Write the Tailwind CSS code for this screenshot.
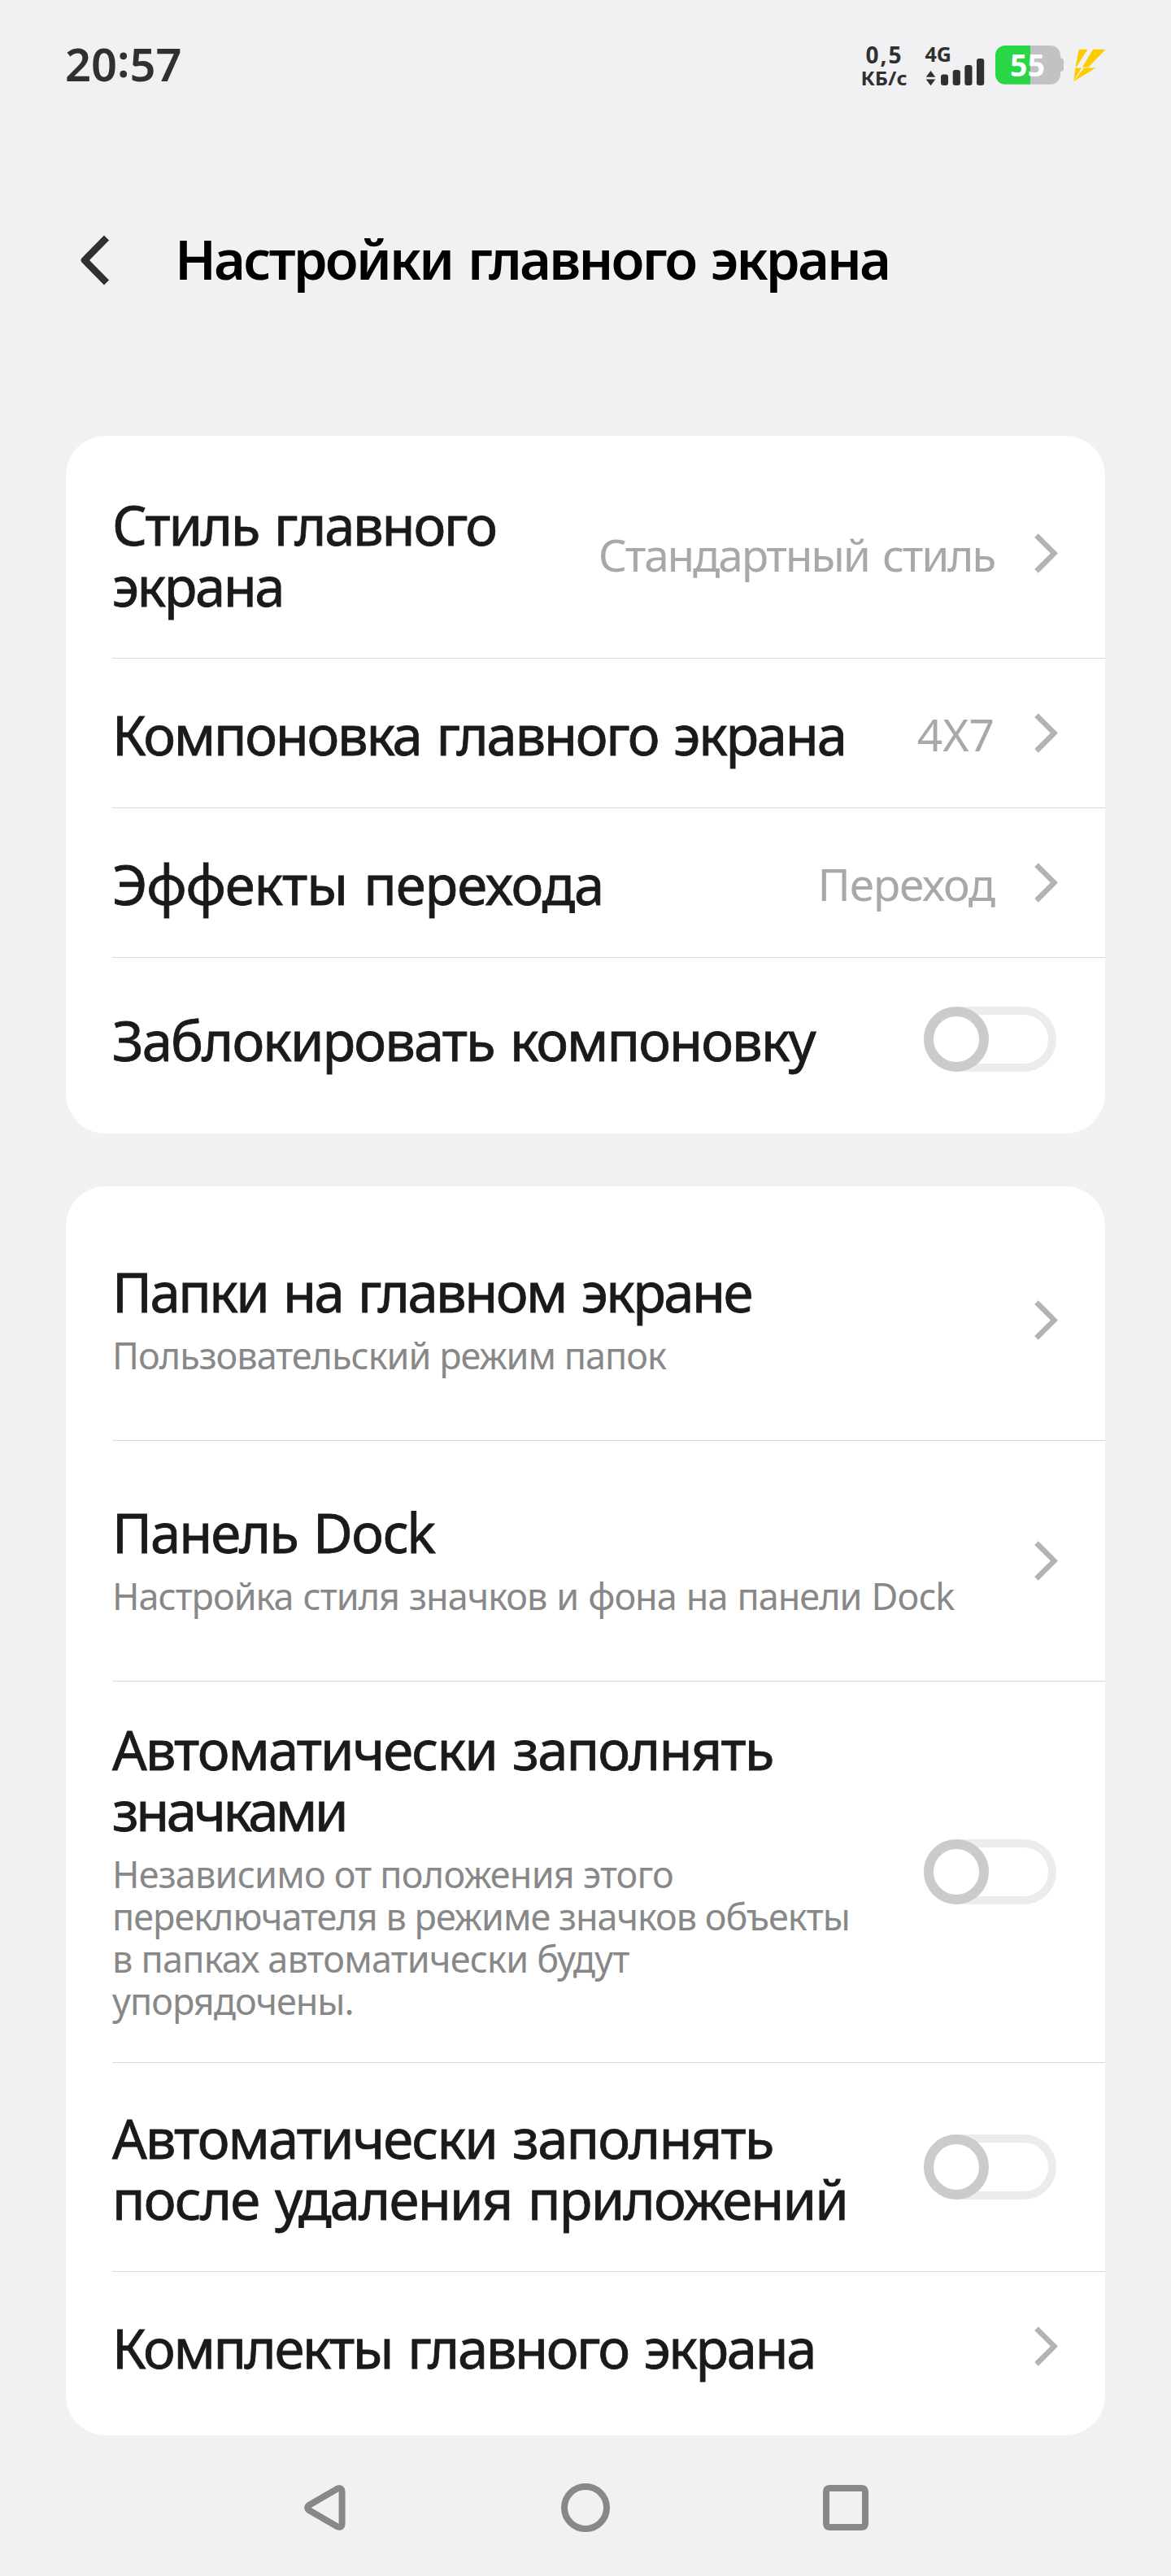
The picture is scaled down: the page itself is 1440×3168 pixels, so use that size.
<!DOCTYPE html>
<html lang="ru">
<head>
<meta charset="utf-8">
<meta name="viewport" content="width=device-width, initial-scale=1">
<title>Настройки главного экрана</title>
<script src="https://cdn.jsdelivr.net/npm/@tailwindcss/browser@4"></script>
</head>
<body class="bg-[#f1f1f4] font-['Noto_Sans',sans-serif] whitespace-nowrap">
<svg width="0" height="0" class="hidden">
  <symbol id="chevron" viewBox="0 0 29 49"><path d="M2.5 2.6 24.4 24.5 2.5 46.4" fill="none" stroke="#b3b3b3" stroke-width="6.5"/></symbol>
</svg>
<div class="flex h-[3168px] w-[1440px] flex-col overflow-hidden">

  <!-- Status bar -->
  <div class="flex h-[160px] shrink-0 items-start justify-between pl-[80px] pr-[79px] pt-[50px] text-[#303030]">
    <div class="-mt-[10px] text-[56px] leading-[76px] font-semibold">20<span class="relative -top-[5px]">:</span>57</div>
    <div class="flex">
      <svg class="mr-[16px] overflow-visible" width="62" height="60" viewBox="0 0 62 60" fill="#303030" font-weight="700" text-anchor="middle">
        <text x="30.5" y="27.5" font-size="28" textLength="44">0,5</text>
        <text x="31" y="54.8" font-size="24" textLength="57" lengthAdjust="spacingAndGlyphs">КБ/с</text>
      </svg>
      <svg class="mr-[10px]" width="80" height="60" viewBox="0 0 80 60" fill="#303030">
        <text x="3.5" y="25.7" font-size="25" font-weight="700" textLength="32.5" lengthAdjust="spacingAndGlyphs">4G</text>
        <path d="M10.5 37 16.3 44.7H4.7ZM10.5 55.3 4.7 47.6H16.3Z"/>
        <rect x="23" y="41.5" width="9" height="13.5" rx="3"/>
        <rect x="37.7" y="36" width="9.2" height="19" rx="3"/>
        <rect x="52.3" y="30" width="9.2" height="25" rx="3"/>
        <rect x="67" y="22" width="9.2" height="33" rx="3"/>
      </svg>
      <svg class="mr-[7px]" width="85" height="60" viewBox="0 0 85 60">
        <path d="M43 6H68A12 12 0 0 1 80 18V21.3C83 21.6 84 23 84 25V34.5C84 36.5 83 38 80 38.3V41.7A12 12 0 0 1 68 53.7H43Z" fill="#c2c2c5"/>
        <path d="M12 6H43V53.7H12A12 12 0 0 1 0 41.7V18A12 12 0 0 1 12 6Z" fill="#29d645"/>
        <text x="39.4" y="43.5" font-size="37.5" font-weight="700" fill="#fff" text-anchor="middle">55</text>
      </svg>
      <svg width="45" height="60" viewBox="0 0 45 60" fill="#fecb00">
        <path d="M10.7 10.7H21.5L8 32H6.7ZM28 10.7H43.5L22.5 32.6H15ZM6.5 33.4H14.2L4.2 49.2ZM17 33.4H31.5L3.8 50.5Z"/>
      </svg>
    </div>
  </div>

  <!-- Title -->
  <div class="flex h-[376px] shrink-0 items-start gap-[79px] pl-[96px] pt-[120px]">
    <svg width="40" height="76" viewBox="0 0 40 76"><path d="M35 12.5 8 40 35 67.5" fill="none" stroke="#303030" stroke-width="8.6" stroke-linejoin="round"/></svg>
    <h1 class="text-[67px] leading-[76px] font-semibold tracking-[-2.8px] [word-spacing:4px] text-black">Настройки главного экрана</h1>
  </div>

  <!-- Layout settings -->
  <div class="mx-[81px] h-[858px] shrink-0 rounded-[49px] bg-white pl-[57px] text-[67px] leading-[76px] font-normal tracking-[-2.3px] [word-spacing:4px] text-[#1a1a1a] [-webkit-text-stroke:0.8px_#1a1a1a]">
    <div class="flex h-[274px] items-start border-b border-[#d9d9d9] pr-[58px]">
      <div class="mt-[72px] flex-1 leading-[75px]">Стиль главного<br><span class="tracking-[-2.5px]">экрана</span></div>
      <div class="mt-[108px] mr-[49px] text-[55px] leading-[75px] tracking-[-2.2px] text-[#a8a8a8] [-webkit-text-stroke:0px]">Стандартный стиль</div>
      <svg class="mt-[120px]" width="29" height="49"><use href="#chevron"/></svg>
    </div>
    <div class="flex h-[184px] items-start border-b border-[#d9d9d9] pr-[58px]">
      <div class="mt-[55px] flex-1">Компоновка главного экрана</div>
      <div class="mt-[55px] mr-[49px] text-[55px] leading-[75px] tracking-[0px] text-[#a8a8a8] [-webkit-text-stroke:0px]">4X7</div>
      <svg class="mt-[67px]" width="29" height="49"><use href="#chevron"/></svg>
    </div>
    <div class="flex h-[184px] items-start border-b border-[#d9d9d9] pr-[58px]">
      <div class="mt-[55px] flex-1 tracking-[-1.1px]">Эффекты перехода</div>
      <div class="mt-[55px] mr-[49px] text-[55px] leading-[75px] tracking-[-1.2px] text-[#a8a8a8] [-webkit-text-stroke:0px]">Переход</div>
      <svg class="mt-[67px]" width="29" height="49"><use href="#chevron"/></svg>
    </div>
    <div class="flex items-start pr-[60px]">
      <div class="mt-[63px] flex-1 tracking-[-1.95px]">Заблокировать компоновку</div>
      <div class="mt-[60px] flex h-[80px] w-[163px] rounded-full bg-[#ececec]">
        <div class="relative m-[10px] flex-1 rounded-full bg-white">
          <div class="absolute -top-[10px] -left-[10px] size-[80px] rounded-full border-12 border-[#cbcbcb] bg-white"></div>
        </div>
      </div>
    </div>
  </div>

  <!-- Folders, dock and auto-fill -->
  <div class="mx-[81px] mt-[65px] h-[1536px] shrink-0 rounded-[49px] bg-white pl-[57px] text-[67px] leading-[76px] font-normal tracking-[-2.1px] [word-spacing:4px] text-[#1a1a1a] [-webkit-text-stroke:0.8px_#1a1a1a]">
    <div class="flex h-[313px] items-start border-b border-[#d9d9d9] pr-[58px]">
      <div class="mt-[91px] flex-1 tracking-[-2.6px]">Папки на главном экране
        <p class="mt-[15px] text-[45px] leading-[52px] tracking-[-1px] [word-spacing:0px] text-[#888] [-webkit-text-stroke:0px]">Пользовательский режим папок</p>
      </div>
      <svg class="mt-[140px]" width="29" height="49"><use href="#chevron"/></svg>
    </div>
    <div class="flex h-[296px] items-start border-b border-[#d9d9d9] pr-[58px]">
      <div class="mt-[74px] flex-1">Панель Dock
        <p class="mt-[15px] text-[45px] leading-[52px] tracking-[-1px] [word-spacing:1.3px] text-[#888] [-webkit-text-stroke:0px]">Настройка стиля значков и фона на панели Dock</p>
      </div>
      <svg class="mt-[123px]" width="29" height="49"><use href="#chevron"/></svg>
    </div>
    <div class="flex h-[469px] items-start border-b border-[#d9d9d9] pr-[60px]">
      <div class="mt-[46px] flex-1 leading-[75px]"><span class="tracking-[-1.9px]">Автоматически заполнять</span><br><span class="tracking-[-3.5px]">значками</span>
        <p class="mt-[15px] text-[45px] leading-[52px] tracking-[-1px] [word-spacing:0px] text-[#888] [-webkit-text-stroke:0px]"><span class="tracking-[-0.8px]">Независимо от положения этого</span><br>переключателя в режиме значков объекты<br><span class="tracking-[-0.8px]">в папках автоматически будут</span><br>упорядочены.</p>
      </div>
      <div class="mt-[194px] flex h-[80px] w-[163px] rounded-full bg-[#ececec]">
        <div class="relative m-[10px] flex-1 rounded-full bg-white">
          <div class="absolute -top-[10px] -left-[10px] size-[80px] rounded-full border-12 border-[#cbcbcb] bg-white"></div>
        </div>
      </div>
    </div>
    <div class="flex h-[257px] items-start border-b border-[#d9d9d9] pr-[60px]">
      <div class="mt-[55px] flex-1 leading-[75px]"><span class="tracking-[-1.9px]">Автоматически заполнять</span><br><span class="tracking-[-1.85px]">после удаления приложений</span></div>
      <div class="mt-[88px] flex h-[80px] w-[163px] rounded-full bg-[#ececec]">
        <div class="relative m-[10px] flex-1 rounded-full bg-white">
          <div class="absolute -top-[10px] -left-[10px] size-[80px] rounded-full border-12 border-[#cbcbcb] bg-white"></div>
        </div>
      </div>
    </div>
    <div class="flex items-start pr-[58px]">
      <div class="mt-[55px] flex-1 tracking-[-2.45px]">Комплекты главного экрана</div>
      <svg class="mt-[67px]" width="29" height="49"><use href="#chevron"/></svg>
    </div>
  </div>

  <!-- Navigation bar -->
  <div class="mt-[59px] flex shrink-0 justify-center gap-[260px]">
    <svg width="60" height="60" viewBox="0 0 60 60"><path fill="#888" fill-rule="evenodd" d="M8 23.4 42 3.7C46 1.2 54.6 1 54.6 11V49C54.6 59 46 58.8 42 56.3L8 36.6C3 33.5 3 26.5 8 23.4ZM12.7 30 46.6 49.7V10.3Z"/></svg>
    <svg width="60" height="60" viewBox="0 0 60 60"><circle cx="30" cy="30" r="26" fill="none" stroke="#888" stroke-width="8"/></svg>
    <svg width="60" height="60" viewBox="0 0 60 60"><path fill="#888" fill-rule="evenodd" d="M11 2H49Q58 2 58 11V49Q58 58 49 58H11Q2 58 2 49V11Q2 2 11 2ZM11 10Q10 10 10 11V49Q10 50 11 50H49Q50 50 50 49V11Q50 10 49 10Z"/></svg>
  </div>
</div>
</body>
</html>
